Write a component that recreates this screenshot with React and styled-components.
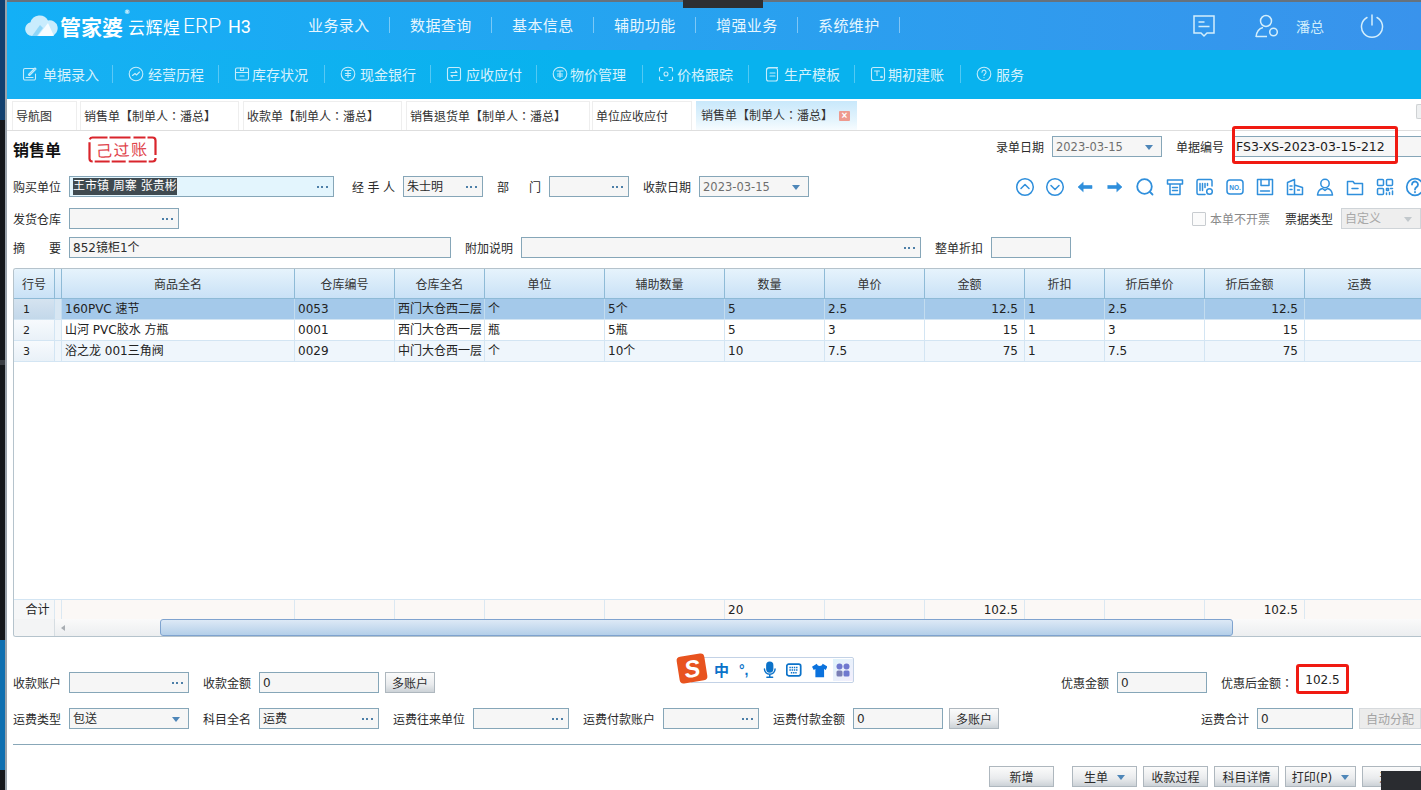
import React from "react";
import styled, { createGlobalStyle } from "styled-components";

const GlobalStyle = createGlobalStyle`
  html, body { margin: 0; padding: 0; background: #fff; overflow: hidden; }
  body { font-family: "DejaVu Sans", "Noto Sans CJK SC", sans-serif; font-size: 12px; color: #2b2b2b; }
  * { box-sizing: border-box; }
`;

const COLS = "41px 7px 233px 100px 90px 120px 120px 100px 100px 100px 80px 100px 100px 130px";

const columns = ["行号", "", "商品全名", "仓库编号", "仓库全名", "单位", "辅助数量", "数量", "单价", "金额", "折扣", "折后单价", "折后金额", "运费"];
const rows = [
  ["1", "", "160PVC 速节", "0053", "西门大仓西二层", "个", "5个", "5", "2.5", "12.5", "1", "2.5", "12.5", ""],
  ["2", "", "山河 PVC胶水 方瓶", "0001", "西门大仓西一层", "瓶", "5瓶", "5", "3", "15", "1", "3", "15", ""],
  ["3", "", "浴之龙 001三角阀", "0029", "中门大仓西一层", "个", "10个", "10", "7.5", "75", "1", "7.5", "75", ""],
];
const totals = ["合计", "", "", "", "", "", "", "20", "", "102.5", "", "", "102.5", ""];
const rightCols = [9, 12];

const navItems = ["业务录入", "数据查询", "基本信息", "辅助功能", "增强业务", "系统维护"];
const tabs = [
  { label: "导航图", w: 65, mr: 3 },
  { label: "销售单【制单人：潘总】", w: 159, mr: 4 },
  { label: "收款单【制单人：潘总】", w: 159, mr: 4 },
  { label: "销售退货单【制单人：潘总】", w: 184, mr: 2 },
  { label: "单位应收应付", w: 100, mr: 4 },
];

const SubIcon = ({ children }) => (
  <svg width="16" height="16" viewBox="0 0 16 16" fill="none" stroke="#c5ecfb" strokeWidth="1.1" strokeLinecap="round" strokeLinejoin="round">
    {children}
  </svg>
);

const subItems = [
  { label: "单据录入", gap: 5, icon: <><path d="M12 2.5H3a1.5 1.5 0 0 0-1.5 1.5v8.5A1.5 1.5 0 0 0 3 14h9a1.5 1.5 0 0 0 1.5-1.5V8" /><path d="M6.5 9l1 .5L14 3l-1-1-6.5 6.5z" /><path d="M4 11.5h7" /></> },
  { label: "经营历程", gap: 4, icon: <><circle cx="8" cy="8" r="6.8" /><path d="M4.5 9.5L7 7.5l1.5 1.5 3-3" /></> },
  { label: "库存状况", gap: 2, icon: <><rect x="1.5" y="2" width="13" height="12" rx="1.5" /><path d="M1.5 6.5h13M6.5 2v2.5h3V2M6 10h4" /></> },
  { label: "现金银行", gap: 4, icon: <><circle cx="8" cy="8" r="6.8" /><path d="M5 4.5h6M8 4.5v7M5.5 7.5h5M5.5 9.5h5" /></> },
  { label: "应收应付", gap: 4, icon: <><rect x="1.5" y="1.5" width="13" height="13" rx="2" /><path d="M5 6.5h6L9.5 5M11 9.5H5l1.5 1.5" /></> },
  { label: "物价管理", gap: 2, icon: <><circle cx="8" cy="8" r="6.8" /><path d="M5 5h6M8 5v6.5M5.5 8h5M5.5 10h5" /></> },
  { label: "价格跟踪", gap: 3, icon: <><path d="M5 1.5H3A1.5 1.5 0 0 0 1.5 3v2M11 1.5h2A1.5 1.5 0 0 1 14.5 3v2M5 14.5H3A1.5 1.5 0 0 1 1.5 13v-2M11 14.5h2a1.5 1.5 0 0 0 1.5-1.5v-2" /><circle cx="8" cy="8" r="2" /></> },
  { label: "生产模板", gap: 4, icon: <><rect x="2.5" y="2" width="11" height="13" rx="2" /><path d="M2.5 4.5C2.5 2.5 4 1.5 6 1.5h7.5M6 7h5M6 10h5" /></> },
  { label: "期初建账", gap: 2, icon: <><rect x="1.5" y="1.5" width="13" height="13" rx="2" /><path d="M4.5 5h5M7 5v4.5" /><circle cx="11.5" cy="11" r=".8" /></> },
  { label: "服务", gap: 4, icon: <><circle cx="8" cy="8" r="6.8" /><path d="M6 6.2a2 2 0 1 1 3 1.7c-.7.4-1 .8-1 1.6M8 11.5v.3" /></> },
];

const ToolIcon = ({ children }) => (
  <svg width="20" height="20" viewBox="0 0 20 20" fill="none" stroke="#2f8fdc" strokeWidth="1.5" strokeLinecap="round" strokeLinejoin="round">
    {children}
  </svg>
);

const toolIcons = [
  <><circle cx="10" cy="10" r="8.3" /><path d="M6 11.5l4-4 4 4" /></>,
  <><circle cx="10" cy="10" r="8.3" /><path d="M6 8.5l4 4 4-4" /></>,
  <path d="M8 5.5L3 10l5 4.500zM8 8.500h9v3H8z" fill="#2f8fdc" strokeWidth=".6" />,
  <path d="M12 5.500l5 4.500-5 4.500zM3 8.500h9v3H3z" fill="#2f8fdc" strokeWidth=".6" />,
  <><circle cx="9.500" cy="9.500" r="7.300" strokeWidth="1.800" /><path d="M15 15l2.500 2.500" strokeWidth="1.800" /></>,
  <><path d="M2.500 3h15v4h-15zM5 7v10.500h10V7" /><path d="M7.500 10.500h5M7.500 13.500h5" /></>,
  <><path d="M17 9V4a1.500 1.500 0 0 0-1.500-1.500h-12A1.500 1.500 0 0 0 2 4v12a1.500 1.500 0 0 0 1.500 1.500H10" /><path d="M5 6.500v7M7.500 6.500v7M10 6.500v4M12.500 6.500v2" /><circle cx="14.500" cy="14.500" r="2.800" /></>,
  <><rect x="2" y="3" width="16" height="14" rx="3" /><text x="10" y="12.500" fontSize="6.500" fontWeight="700" textAnchor="middle" fill="#2f8fdc" stroke="none" fontFamily="Liberation Sans, sans-serif">NO.</text></>,
  <><path d="M2.500 2.500h15v15h-15z" /><path d="M6 2.500v6h8v-6M5.500 14h9" /></>,
  <><path d="M2.500 17.500V5.500l7-3v15zM9.500 8l8 2.500v7h-15" /><path d="M5 9h2M5 12.500h2M12.500 13h2" /></>,
  <><circle cx="10" cy="6.500" r="4.200" /><path d="M2.500 18c.5-4 2.500-6 5-6.500l2.500 2 2.500-2c2.500.5 4.500 2.500 5 6.500z" /></>,
  <><path d="M2.500 4.500h5.500l1.500 2h8v11h-15z" /><path d="M7 11.500h6" /></>,
  <><rect x="2.500" y="2.500" width="6" height="6" rx="1" /><rect x="11.500" y="2.500" width="6" height="6" rx="1" /><rect x="2.500" y="11.500" width="6" height="6" rx="1" /><path d="M11.500 11.500h2v2h-2zM15.500 11.500h2M17.500 14v3.500M11.500 16v1.500M14.500 15.500v2" /></>,
  <><circle cx="10" cy="10" r="8.300" strokeWidth="1.700" /><path d="M7 7.500a3 3 0 1 1 4.500 2.600c-1 .6-1.500 1.200-1.500 2.400M10 15v.3" strokeWidth="1.800" /></>,
];

export default function App() {
  return (
    <Page>
      <GlobalStyle />
      <WindowEdge />
      <Main>
        <TopGrabber />
        <Header>
          <Logo>
            <svg width="36" height="22" viewBox="0 0 36 22">
              <path d="M8 21a7 7 0 0 1-1.500-13.800A9.500 9.500 0 0 1 24 5.500a7.800 7.800 0 0 1 3.500 15.500z" fill="#c9ecfd" />
              <path d="M14 21L24 8l6 13z" fill="#ffffff" opacity=".85" />
              <path d="M8 21l8-11 3 3-6 8z" fill="#8fd6f8" />
            </svg>
            <LogoMain>管家婆<LogoMark>®</LogoMark></LogoMain>
            <LogoSub>云辉煌</LogoSub>
            <LogoLatin>ERP</LogoLatin>
            <LogoVersion>H3</LogoVersion>
          </Logo>
          <Nav>
            {navItems.map((n) => (
              <NavItem key={n}>{n}</NavItem>
            ))}
          </Nav>
          <HeaderRight>
            <svg width="24" height="24" viewBox="0 0 24 24" fill="none" stroke="#d3eefc" strokeWidth="1.500">
              <path d="M2 2h20v17h-7l-3 3-3-3H2z" />
              <path d="M6.500 8h6M6.500 12.500h11" />
            </svg>
            <UserBlock>
              <svg width="24" height="24" viewBox="0 0 24 24" fill="none" stroke="#d3eefc" strokeWidth="1.500">
                <circle cx="11" cy="7" r="5.500" />
                <path d="M1 23c.5-5 3-8.500 7-9.500M12 22.500H1" />
                <circle cx="18.500" cy="18" r="3.800" />
              </svg>
              <UserName>潘总</UserName>
            </UserBlock>
            <svg width="24" height="24" viewBox="0 0 24 24" fill="none" stroke="#d3eefc" strokeWidth="1.500" strokeLinecap="round">
              <path d="M7 3.500a10.500 10.500 0 1 0 10 0M12 1v10" />
            </svg>
          </HeaderRight>
        </Header>

        <SubNav>
          {subItems.map((s) => (
            <SubItem key={s.label} $gap={s.gap}>
              <SubIcon>{s.icon}</SubIcon>
              {s.label}
            </SubItem>
          ))}
        </SubNav>

        <TabBar>
          {tabs.map((t) => (
            <Tab key={t.label} $w={t.w} $mr={t.mr}>{t.label}</Tab>
          ))}
          <ActiveTab>
            销售单【制单人：潘总】
            <CloseBox>×</CloseBox>
          </ActiveTab>
          <TabMenu />
        </TabBar>

        <Form>
          <TitleRow>
            <Title>销售单</Title>
            <Stamp>
              <svg width="69" height="27" viewBox="0 0 69 27" fill="none">
                <rect x="1.500" y="1.500" width="66" height="24" rx="3" stroke="#d9252c" strokeWidth="2.200" strokeDasharray="15 2 21 3 12 2 24 3 9 2 18 3 14 2" />
              </svg>
              <StampText>己过账</StampText>
            </Stamp>
            <TitleRight>
              <Label>录单日期</Label>
              <Input $w={110}><Muted>2023-03-15</Muted><Caret /></Input>
              <Label $ml={14}>单据编号</Label>
              <NumberBox>
                <Input $w={195}><Strong>FS3-XS-2023-03-15-212</Strong></Input>
                <RedFrame />
              </NumberBox>
            </TitleRight>
          </TitleRow>

          <FormRow>
            <Label>购买单位</Label>
            <Input $w={265} $bg="#e3f5fd">
              <Selected>王市镇 周寨 张贵彬</Selected>
              <Dots />
            </Input>
            <Label $ml={18} $w={43} $spread>
              <span>经</span><span>手</span><span>人</span>
            </Label>
            <Input $w={80}>朱士明<Dots /></Input>
            <Label $ml={14} $w={44} $spread>
              <span>部</span><span>门</span>
            </Label>
            <Input $w={80}><Dots /></Input>
            <Label $ml={14}>收款日期</Label>
            <Input $w={110}><Muted>2023-03-15</Muted><Caret /></Input>
            <Toolbar>
              {toolIcons.map((icon, i) => (
                <ToolIcon key={i}>{icon}</ToolIcon>
              ))}
            </Toolbar>
          </FormRow>

          <FormRow $mt={11}>
            <Label>发货仓库</Label>
            <Input $w={110}><Dots /></Input>
            <InvoiceBlock>
              <Check />
              <Label $muted>本单不开票</Label>
              <Label $ml={7}>票据类型</Label>
              <Input $w={80} $disabled>自定义<Caret $light /></Input>
            </InvoiceBlock>
          </FormRow>

          <FormRow $mt={8}>
            <Label $w={48} $spread><span>摘</span><span>要</span></Label>
            <Input $w={382}>852镜柜1个</Input>
            <Label $ml={14}>附加说明</Label>
            <Input $w={400}><Dots /></Input>
            <Label $ml={14}>整单折扣</Label>
            <Input $w={80} />
          </FormRow>

          <GridBox>
            <GridHead>
              {columns.map((c, i) => (
                <HeadCell key={i} $idx={i}>{c}</HeadCell>
              ))}
            </GridHead>
            {rows.map((r, ri) => (
              <GridRow key={r[0]} $state={ri}>
                {r.map((v, i) => (
                  <Cell key={i} $idx={i} $right={rightCols.includes(i)} $state={ri}>{v}</Cell>
                ))}
              </GridRow>
            ))}
            <GridFill />
            <TotalRow>
              {totals.map((v, i) => (
                <TotalCell key={i} $idx={i} $right={rightCols.includes(i)}>{v}</TotalCell>
              ))}
            </TotalRow>
            <ScrollRow>
              <ScrollCorner />
              <ScrollTrack>
                <ScrollArrow />
                <ScrollThumb />
              </ScrollTrack>
            </ScrollRow>
          </GridBox>

          <FormRow $mt={35}>
            <Label>收款账户</Label>
            <Input $w={120}><Dots /></Input>
            <Label $ml={14}>收款金额</Label>
            <Input $w={120}>0</Input>
            <Button $w={50} $ml={6}>多账户</Button>
            <RightGroup $pr={72}>
              <Label>优惠金额</Label>
              <Input $w={90}>0</Input>
              <DiscountLabel>优惠后金额：</DiscountLabel>
              <AmountBox>102.5</AmountBox>
            </RightGroup>
          </FormRow>

          <FormRow $mt={15}>
            <Label>运费类型</Label>
            <Input $w={120}>包送<Caret /></Input>
            <Label $ml={14}>科目全名</Label>
            <Input $w={120}>运费<Dots /></Input>
            <Label $ml={14}>运费往来单位</Label>
            <Input $w={96}><Dots /></Input>
            <Label $ml={14}>运费付款账户</Label>
            <Input $w={96}><Dots /></Input>
            <Label $ml={14}>运费付款金额</Label>
            <Input $w={90}>0</Input>
            <Button $w={50} $ml={6}>多账户</Button>
            <RightGroup>
              <Label>运费合计</Label>
              <Input $w={96}>0</Input>
              <Button $w={62} $ml={6} $disabled>自动分配</Button>
            </RightGroup>
          </FormRow>

          <Divider />

          <ActionRow>
            <Button $w={65}>新增</Button>
            <Button $w={65} $ml={18}>生单<SmallCaret /></Button>
            <Button $w={65} $ml={6}>收款过程</Button>
            <Button $w={65} $ml={6}>科目详情</Button>
            <Button $w={71} $ml={6}>打印(P)<SmallCaret /></Button>
            <Button $w={59} $ml={6}>退出</Button>
          </ActionRow>
        </Form>
      </Main>

      <ImeBar>
        <ImeLogo><ImeS>S</ImeS></ImeLogo>
        <ImeZh>中</ImeZh>
        <ImePunct>°,</ImePunct>
        <svg width="14" height="18" viewBox="0 0 14 18" fill="none" stroke="#0b72c9" strokeWidth="1.500" strokeLinecap="round">
          <rect x="4" y="1" width="6" height="10" rx="3" fill="#0b72c9" />
          <path d="M1.500 8a5.500 5.500 0 0 0 11 0M7 13.500V16M4 16.500h6" />
        </svg>
        <svg width="16" height="14" viewBox="0 0 16 14" fill="none">
          <rect x=".8" y="1" width="14.400" height="12" rx="2" stroke="#0b72c9" strokeWidth="1.800" />
          <path d="M3.500 4.500h9M3.500 7h9M5 9.800h6" stroke="#0b72c9" strokeWidth="1.600" strokeDasharray="1.500 .8" />
        </svg>
        <svg width="16" height="15" viewBox="0 0 16 15">
          <path d="M5 .5L0 3.500l1.800 3.500L3.500 6v8.500h9V6l1.700 1L16 3.500 11 .5C10.500 2 9.500 2.800 8 2.800S5.500 2 5 .5z" fill="#0b72dd" />
        </svg>
        <ImeApps>
          <svg width="14" height="14" viewBox="0 0 14 14" fill="#6f79cf">
            <circle cx="3.500" cy="3.500" r="3" />
            <circle cx="10.500" cy="3.500" r="3" />
            <rect x=".5" y="7.500" width="6" height="6" rx="1.500" fill="#7a7fb5" />
            <rect x="7.500" y="7.500" width="6" height="6" rx="1.500" />
          </svg>
        </ImeApps>
      </ImeBar>
      <CornerShade />
    </Page>
  );
}

const Page = styled.div`
  position: relative;
  display: flex;
  width: 1421px;
  height: 790px;
  overflow: hidden;
  background: #fff;
`;
const WindowEdge = styled.div`
  flex: 0 0 7px;
  background:
    linear-gradient(90deg, transparent 0 5px, #9aa2aa 5px 7px),
    linear-gradient(180deg, #12406f 0 120px, #15171a 120px 360px, #3a3d42 360px 365px, #15171a 365px 640px, #0e6fb0 640px 770px, #15171a 770px);
`;
const Main = styled.div`
  flex: 1;
  min-width: 0;
  display: flex;
  flex-direction: column;
  border-top: 2px solid #66727d;
`;
const TopGrabber = styled.div`
  position: absolute;
  top: 0;
  left: 683px;
  width: 80px;
  height: 8px;
  background: #2d2f33;
  z-index: 3;
`;
const Header = styled.header`
  height: 48px;
  display: flex;
  align-items: center;
  padding-left: 17px;
  background: linear-gradient(90deg, #13b0f6 0%, #26a3f0 45%, #3993ec 100%);
`;
const Logo = styled.div`
  width: 264px;
  display: flex;
  align-items: center;
  color: #fff;
  white-space: nowrap;
`;
const LogoMain = styled.span`
  font-size: 21px;
  font-weight: 700;
  position: relative;
  width: 68px;
`;
const LogoMark = styled.sup`
  position: absolute;
  top: -2px;
  right: -2px;
  font-size: 6px;
  line-height: 1;
`;
const LogoSub = styled.span`
  font-size: 17px;
  letter-spacing: 0.5px;
  width: 55px;
`;
const LogoLatin = styled.span`
  font-family: Roboto, sans-serif;
  font-size: 21px;
  font-weight: 300;
  width: 45px;
`;
const LogoVersion = styled.span`
  font-family: Roboto, sans-serif;
  font-size: 18px;
  font-weight: 400;
`;
const Nav = styled.nav`
  display: flex;
  align-items: center;
  margin-top: -2px;
`;
const NavItem = styled.div`
  padding: 0 20px;
  width: 102px;
  height: 16px;
  line-height: 16px;
  font-family: "Noto Sans CJK SC", sans-serif;
  font-size: 15px;
  letter-spacing: 0.4px;
  color: #e6f6fe;
  white-space: nowrap;
  border-right: 1px solid rgba(255, 255, 255, 0.4);
`;
const HeaderRight = styled.div`
  margin-left: auto;
  display: flex;
  align-items: center;
  padding-right: 37px;
`;
const UserBlock = styled.div`
  display: flex;
  align-items: center;
  margin: 0 36px 0 39px;
`;
const UserName = styled.span`
  margin-left: 17px;
  font-size: 14px;
  color: #cfeefc;
`;
const SubNav = styled.div`
  height: 49px;
  padding-bottom: 2px;
  display: flex;
  align-items: center;
  background: linear-gradient(90deg, #18b0f3 0%, #08b2ee 40%, #08b2ee 100%);
`;
const SubItem = styled.div`
  display: flex;
  align-items: center;
  gap: ${(p) => p.$gap}px;
  width: 106px;
  height: 18px;
  padding-left: 15px;
  font-family: "Noto Sans CJK SC", sans-serif;
  font-size: 14px;
  color: #d6f2fd;
  white-space: nowrap;
  border-right: 1px solid rgba(255, 255, 255, 0.3);

  &:last-child {
    border-right: none;
  }
`;
const TabBar = styled.div`
  position: relative;
  height: 32px;
  padding: 2px 0 0 5px;
  display: flex;
  background: #fff;
  border-bottom: 1px solid #dedede;
`;
const Tab = styled.div`
  width: ${(p) => p.$w}px;
  margin-right: ${(p) => p.$mr}px;
  padding-left: 3px;
  line-height: 28px;
  font-family: "Noto Sans CJK TC", sans-serif;
  white-space: nowrap;
  color: #333;
  border: 1px solid #eeeeee;
  border-bottom: none;
`;
const ActiveTab = styled(Tab)`
  position: relative;
  width: 161px;
  border: none;
  padding-left: 5px;
  background: linear-gradient(180deg, #c8e8fb 0%, #e6f5fd 70%, #f7fcff 100%);
`;
const CloseBox = styled.span`
  position: absolute;
  right: 7px;
  top: 10px;
  width: 11px;
  height: 10px;
  font: 700 10px/10px "Liberation Sans", sans-serif;
  text-align: center;
  color: #fff;
  background: #ee9a8f;
  border-radius: 1px;
`;
const TabMenu = styled.div`
  margin-left: auto;
  margin-top: 3px;
  width: 5px;
  height: 15px;
  border: 1px solid #cfd2d4;
  border-right: none;
  background: #eef0f1;
  border-radius: 2px 0 0 2px;
`;
const Form = styled.div`
  flex: 1;
  padding-left: 6px;
  display: flex;
  flex-direction: column;
`;
const TitleRow = styled.div`
  height: 45px;
  padding-top: 5px;
  display: flex;
  align-items: flex-start;
`;
const Title = styled.h1`
  margin: 2px 0 0;
  width: 75px;
  font-family: "Noto Sans CJK SC", sans-serif;
  font-size: 16px;
  line-height: 22px;
  font-weight: 700;
  color: #111;
`;
const Stamp = styled.div`
  position: relative;
  width: 69px;
  height: 27px;
  display: flex;
  align-items: center;
  justify-content: center;

  svg {
    position: absolute;
    inset: 0;
  }
`;
const StampText = styled.span`
  margin-top: -2px;
  font-family: "Noto Sans CJK SC", sans-serif;
  font-size: 16px;
  letter-spacing: 1.5px;
  color: #e0434b;
  transform: rotate(-2deg);
`;
const TitleRight = styled.div`
  margin-left: auto;
  margin-right: -6px;
  display: flex;
  align-items: center;
`;
const NumberBox = styled.div`
  position: relative;
`;
const RedFrame = styled.div`
  position: absolute;
  top: -10px;
  left: 0;
  width: 166px;
  height: 38px;
  border: 3px solid #f01a12;
  border-radius: 3px;
  z-index: 2;
`;
const FormRow = styled.div`
  height: 21px;
  flex: 0 0 21px;
  margin-top: ${(p) => p.$mt || 0}px;
  display: flex;
  align-items: center;
`;
const Label = styled.label`
  margin-left: ${(p) => p.$ml || 0}px;
  margin-right: 8px;
  width: ${(p) => (p.$w ? `${p.$w}px` : "auto")};
  display: ${(p) => (p.$spread ? "flex" : "block")};
  justify-content: space-between;
  font-family: "Noto Sans CJK SC", sans-serif;
  font-size: 12px;
  white-space: nowrap;
  color: ${(p) => (p.$muted ? "#8a8a8a" : "#2b2b2b")};
`;
const DiscountLabel = styled(Label)`
  margin-left: 14px;
  margin-right: 7px;
  width: 68px;
  font-family: "Noto Sans CJK TC", sans-serif;
`;
const Input = styled.div`
  flex: 0 0 ${(p) => p.$w}px;
  width: ${(p) => p.$w}px;
  height: 21px;
  padding: 0 3px;
  display: flex;
  align-items: center;
  justify-content: space-between;
  border: 1px solid #86a6b8;
  background: ${(p) => p.$bg || "#f6f6f6"};
  font-size: 12px;
  line-height: 16px;
  color: ${(p) => (p.$disabled ? "#a8a8a8" : "#2b2b2b")};
  white-space: nowrap;
  ${(p) => p.$disabled && "border-color: #cfd4d8; background: #eeeeee;"}
`;
const Muted = styled.span`
  font-size: 11.5px;
  color: #6e6e6e;
`;
const Strong = styled.span`
  font-size: 12.5px;
  color: #1a1a1a;
`;
const Selected = styled.span`
  line-height: 17px;
  background: #3f4a50;
  color: #fff;
`;
const Dots = styled.i`
  flex: none;
  margin: 0 2px 0 auto;
  width: 11px;
  height: 2px;
  background: repeating-linear-gradient(90deg, #4d7fa8 0 2px, transparent 2px 4.5px);
`;
const Caret = styled.i`
  flex: none;
  margin: 2px 5px 0 auto;
  width: 0;
  height: 0;
  border-left: 4px solid transparent;
  border-right: 4px solid transparent;
  border-top: 5px solid ${(p) => (p.$light ? "#c2c8cc" : "#4e86b8")};
`;
const SmallCaret = styled(Caret)`
  margin: 2px 0 0 9px;
`;
const Toolbar = styled.div`
  margin-left: auto;
  margin-right: -4px;
  display: flex;
  gap: 10px;
  padding-top: 1px;
`;
const InvoiceBlock = styled.div`
  margin-left: auto;
  display: flex;
  align-items: center;
`;
const Check = styled.span`
  width: 14px;
  height: 14px;
  margin-right: 4px;
  border: 1px solid #c8ccd0;
  border-radius: 1px;
  background: #fbfbfb;
`;
const GridBox = styled.div`
  margin-top: 10px;
  width: 1408px;
  height: 369px;
  flex: none;
  display: flex;
  flex-direction: column;
  overflow: hidden;
  border: 1px solid #b5c3cc;
  border-right: none;
  border-radius: 3px 0 0 3px;
`;
const GridHead = styled.div`
  flex: 0 0 30px;
  display: grid;
  grid-template-columns: ${COLS};
  background: linear-gradient(180deg, #e6f3fc 0%, #c9e1f6 100%);
  border-bottom: 1px solid #8ebad6;
`;
const HeadCell = styled.div`
  display: flex;
  align-items: center;
  justify-content: center;
  padding-right: ${(p) => (p.$idx === 13 ? 20 : p.$idx >= 5 ? 10 : 0)}px;
  border-right: 1px solid #8ebad6;
  font-family: "Noto Sans CJK SC", sans-serif;
  color: #333;
`;
const GridRow = styled.div`
  flex: 0 0 21px;
  display: grid;
  grid-template-columns: ${COLS};
  background: ${(p) => ["#a4c9ea", "#ffffff", "#eff6fc"][p.$state]};
  border-bottom: 1px solid #d3e5f3;
`;
const Cell = styled.div`
  display: flex;
  align-items: center;
  justify-content: ${(p) => (p.$right ? "flex-end" : "flex-start")};
  padding: 0 ${(p) => (p.$right ? 6 : 3)}px 0 3px;
  line-height: 16px;
  border-right: 1px solid ${(p) => (p.$state === 0 ? "#c3dcef" : "#d3e5f3")};
  color: #222;
  white-space: nowrap;
  overflow: hidden;
  ${(p) => p.$idx === 0 && `
    padding: 2px 0 0 9px;
    font-size: 11px;
    background: ${p.$state === 0 ? "linear-gradient(180deg, #d5e3f0, #c3d8ea)" : "linear-gradient(180deg, #f7fafd, #e9f1f8)"};
  `}
  ${(p) => p.$idx === 1 && `background: ${p.$state === 0 ? "#d7e6f2" : "#f0f6fb"};`}
`;
const GridFill = styled.div`
  flex: 1;
  background: #fff;
`;
const TotalRow = styled.div`
  flex: 0 0 20px;
  display: grid;
  grid-template-columns: ${COLS};
  background: #fbf8f6;
  border-top: 1px solid #d3e5f3;
`;
const TotalCell = styled(Cell)`
  border-right-color: #dbe8f2;
  ${(p) => p.$idx === 0 && `
    justify-content: center;
    padding: 0 0 0 7px;
    font-size: 12px;
    background: #f6f7f8;
  `}
  ${(p) => p.$idx === 1 && "background: #fbf8f6;"}
`;
const ScrollRow = styled.div`
  flex: 0 0 17px;
  display: flex;
`;
const ScrollCorner = styled.div`
  flex: 0 0 41px;
  background: #f3f4f5;
  border-right: 1px solid #d6dde2;
`;
const ScrollTrack = styled.div`
  flex: 1;
  display: flex;
  align-items: stretch;
  background: linear-gradient(180deg, #fafafa, #eceef0);
`;
const ScrollArrow = styled.i`
  flex: none;
  align-self: center;
  margin: 0 0 0 6px;
  width: 0;
  height: 0;
  border-top: 3px solid transparent;
  border-bottom: 3px solid transparent;
  border-right: 4px solid #a8adb2;
`;
const ScrollThumb = styled.div`
  margin-left: 95px;
  width: 1073px;
  background: linear-gradient(180deg, #dde9f6 0%, #b4cfe9 100%);
  border: 1px solid #7fa3cf;
  border-radius: 3px;
`;
const RightGroup = styled.div`
  margin-left: auto;
  padding-right: ${(p) => p.$pr || 0}px;
  display: flex;
  align-items: center;
`;
const AmountBox = styled.div`
  align-self: flex-start;
  width: 53px;
  height: 30px;
  margin-top: -8px;
  padding-top: 3px;
  display: flex;
  align-items: center;
  justify-content: center;
  border: 3px solid #f01a12;
  border-radius: 3px;
  color: #222;
`;
const Button = styled.button`
  flex: none;
  width: ${(p) => p.$w}px;
  height: 21px;
  margin-left: ${(p) => p.$ml || 0}px;
  padding: 0;
  display: flex;
  align-items: center;
  justify-content: center;
  font-family: "DejaVu Sans", "Noto Sans CJK SC", sans-serif;
  font-size: 12px;
  color: ${(p) => (p.$disabled ? "#a3a3a3" : "#2b2b2b")};
  white-space: nowrap;
  border: 1px solid ${(p) => (p.$disabled ? "#d6dadd" : "#aeb7be")};
  background: ${(p) => (p.$disabled ? "#ececec" : "linear-gradient(180deg, #fbfbfb 0%, #e9ebed 60%, #ccd2d7 100%)")};
`;
const Divider = styled.div`
  margin-top: 15px;
  flex: 0 0 1px;
  background: #88a7b8;
`;
const ActionRow = styled.div`
  margin-top: 21px;
  display: flex;
  justify-content: flex-end;
`;
const ImeBar = styled.div`
  position: absolute;
  left: 690px;
  top: 657px;
  width: 164px;
  height: 26px;
  padding-left: 23px;
  display: flex;
  align-items: center;
  gap: 10px;
  background: #fff;
  border: 1px solid #c3d2e6;
  border-radius: 2px;
  z-index: 4;
`;
const ImeLogo = styled.div`
  position: absolute;
  left: -13px;
  top: -3px;
  width: 28px;
  height: 27px;
  display: flex;
  align-items: center;
  justify-content: center;
  background: #e8531f;
  border-radius: 4px;
  transform: rotate(-9deg);
`;
const ImeS = styled.span`
  font: italic 700 24px/1 "Liberation Sans", sans-serif;
  color: #fff;
`;
const ImeZh = styled.span`
  font-family: "Noto Sans CJK SC", sans-serif;
  font-size: 15px;
  line-height: 18px;
  font-weight: 700;
  color: #0b72c9;
`;
const ImePunct = styled.span`
  width: 14px;
  font: 700 14px/1 "Liberation Sans", sans-serif;
  color: #0b72c9;
`;
const ImeApps = styled.div`
  margin-left: -4px;
  padding: 4px 3px;
  display: flex;
  background: linear-gradient(135deg, #dff3fb, #f3eefc);
`;
const CornerShade = styled.div`
  position: absolute;
  right: 0;
  bottom: 0;
  width: 40px;
  height: 19px;
  background: #2a2c30;
  z-index: 3;
`;
